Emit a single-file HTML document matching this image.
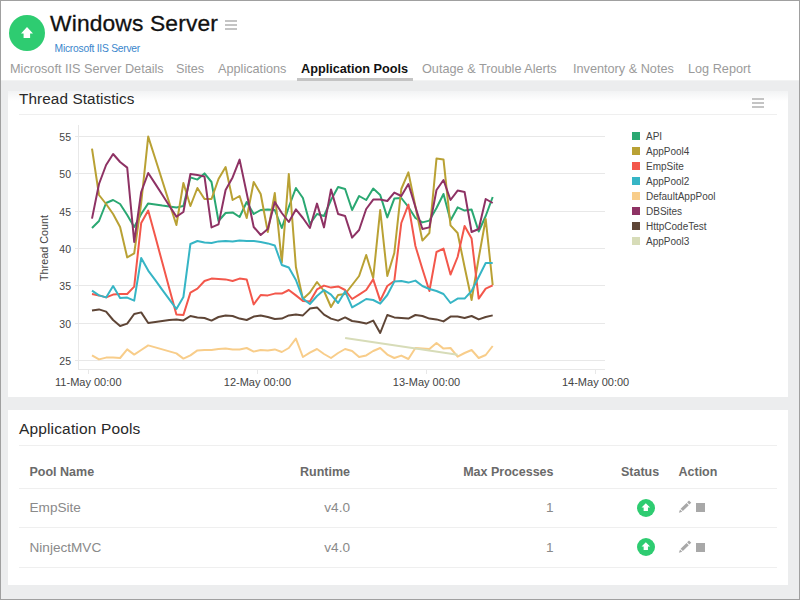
<!DOCTYPE html>
<html><head><meta charset="utf-8">
<style>
*{margin:0;padding:0;box-sizing:border-box}
html,body{width:800px;height:600px;overflow:hidden;background:#fff}
body{position:relative;font-family:"Liberation Sans",sans-serif}
.t{position:absolute;white-space:nowrap;line-height:1}
.frame{position:absolute;left:0;top:0;width:800px;height:600px;border:1px solid #a0a0a0;z-index:50;pointer-events:none}
.bg{position:absolute;left:1px;top:80px;width:798px;height:519px;background:#ecedee;border-top:1px solid #f2f3f3}
.panel{position:absolute;left:8px;width:780px;background:#fff}
.sep{position:absolute;height:1px;background:#efefef}
.tab{font-size:12.7px;color:#9b9b9b}
.ham span{position:absolute;left:0;width:12px;height:2px;background:#c4c4c4}
.th{font-size:12.5px;font-weight:bold;color:#6a6a6a}
.td{font-size:13.6px;color:#8a8a8a}
</style></head><body>
<div class="frame"></div>

<!-- header -->
<svg style="position:absolute;left:9px;top:15px" width="36" height="36" viewBox="0 0 36 36">
<circle cx="18" cy="18" r="18" fill="#2ecc71"/>
<path d="M18 12 L24 18.5 L21.1 18.5 L21.1 23 L14.6 23 L14.6 18.5 L12 18.5 Z" fill="#fff"/>
</svg>
<div class="t" style="left:50px;top:12.1px;font-size:22.8px;letter-spacing:0.15px;-webkit-text-stroke:0.3px #111;color:#111">Windows Server</div>
<div class="ham" style="position:absolute;left:225px;top:20px;width:12px;height:10px">
<span style="top:0"></span><span style="top:4px"></span><span style="top:8px"></span></div>
<div class="t" style="left:54.6px;top:44.4px;font-size:10.3px;letter-spacing:-0.25px;color:#3a86cc">Microsoft IIS Server</div>

<div class="t tab" style="left:10px;top:63.1px">Microsoft IIS Server Details</div>
<div class="t tab" style="left:176px;top:63.1px">Sites</div>
<div class="t tab" style="left:218px;top:63.1px">Applications</div>
<div class="t tab" style="left:301px;top:63.1px;color:#111;font-weight:bold">Application Pools</div>
<div class="t tab" style="left:422px;top:63.1px">Outage &amp; Trouble Alerts</div>
<div class="t tab" style="left:573px;top:63.1px">Inventory &amp; Notes</div>
<div class="t tab" style="left:688px;top:63.1px">Log Report</div>
<div style="position:absolute;left:297px;top:78px;width:116px;height:3px;background:#c4c4c4;z-index:2"></div>

<div class="bg"></div>

<!-- panel 1 -->
<div class="panel" style="top:91px;height:306px">
  <div style="position:absolute;left:0;top:0;width:780px;height:10px;background:linear-gradient(#f2f3f4,#fff)"></div>
</div>
<div class="t" style="left:19px;top:91.2px;font-size:15.3px;letter-spacing:0.1px;color:#282828">Thread Statistics</div>
<div class="ham" style="position:absolute;left:752px;top:98px;width:12px;height:10px">
<span style="top:0"></span><span style="top:4px"></span><span style="top:8px"></span></div>
<div class="sep" style="left:19px;top:114px;width:758px"></div>

<svg id="chart" style="position:absolute;left:0;top:0" width="800" height="400" viewBox="0 0 800 400">
<line x1="75" y1="136.5" x2="605" y2="136.5" stroke="#e8e8e8" stroke-width="1"/>
<text x="71" y="140.7" text-anchor="end" font-size="10.5" fill="#444">55</text>
<line x1="75" y1="173.5" x2="605" y2="173.5" stroke="#e8e8e8" stroke-width="1"/>
<text x="71" y="177.7" text-anchor="end" font-size="10.5" fill="#444">50</text>
<line x1="75" y1="211.5" x2="605" y2="211.5" stroke="#e8e8e8" stroke-width="1"/>
<text x="71" y="215.7" text-anchor="end" font-size="10.5" fill="#444">45</text>
<line x1="75" y1="248.5" x2="605" y2="248.5" stroke="#e8e8e8" stroke-width="1"/>
<text x="71" y="252.7" text-anchor="end" font-size="10.5" fill="#444">40</text>
<line x1="75" y1="285.5" x2="605" y2="285.5" stroke="#e8e8e8" stroke-width="1"/>
<text x="71" y="289.7" text-anchor="end" font-size="10.5" fill="#444">35</text>
<line x1="75" y1="323.5" x2="605" y2="323.5" stroke="#e8e8e8" stroke-width="1"/>
<text x="71" y="327.7" text-anchor="end" font-size="10.5" fill="#444">30</text>
<line x1="75" y1="360.5" x2="605" y2="360.5" stroke="#e8e8e8" stroke-width="1"/>
<text x="71" y="364.7" text-anchor="end" font-size="10.5" fill="#444">25</text>
<line x1="78.5" y1="125" x2="78.5" y2="370" stroke="#e8e8e8"/>
<line x1="78" y1="369.5" x2="605" y2="369.5" stroke="#e8e8e8"/>
<line x1="88.5" y1="370" x2="88.5" y2="374" stroke="#e8e8e8"/>
<text x="88.3" y="385.8" text-anchor="middle" font-size="11" fill="#444">11-May 00:00</text>
<line x1="257.5" y1="370" x2="257.5" y2="374" stroke="#e8e8e8"/>
<text x="257.4" y="385.8" text-anchor="middle" font-size="11" fill="#444">12-May 00:00</text>
<line x1="426.5" y1="370" x2="426.5" y2="374" stroke="#e8e8e8"/>
<text x="426.5" y="385.8" text-anchor="middle" font-size="11" fill="#444">13-May 00:00</text>
<line x1="595.5" y1="370" x2="595.5" y2="374" stroke="#e8e8e8"/>
<text x="595.6" y="385.8" text-anchor="middle" font-size="11" fill="#444">14-May 00:00</text>
<text transform="translate(48.3,248) rotate(-90)" text-anchor="middle" font-size="10.8" fill="#444">Thread Count</text>
<rect x="632" y="132" width="8" height="8" fill="#2aa872"/>
<text x="646" y="139.6" font-size="10" fill="#444">API</text>
<rect x="632" y="147" width="8" height="8" fill="#b9a134"/>
<text x="646" y="154.6" font-size="10" fill="#444">AppPool4</text>
<rect x="632" y="162" width="8" height="8" fill="#f3574b"/>
<text x="646" y="169.6" font-size="10" fill="#444">EmpSite</text>
<rect x="632" y="177" width="8" height="8" fill="#36b5c5"/>
<text x="646" y="184.6" font-size="10" fill="#444">AppPool2</text>
<rect x="632" y="192" width="8" height="8" fill="#f8cd8a"/>
<text x="646" y="199.6" font-size="10" fill="#444">DefaultAppPool</text>
<rect x="632" y="207" width="8" height="8" fill="#8e3264"/>
<text x="646" y="214.6" font-size="10" fill="#444">DBSites</text>
<rect x="632" y="222" width="8" height="8" fill="#5e4536"/>
<text x="646" y="229.6" font-size="10" fill="#444">HttpCodeTest</text>
<rect x="632" y="237" width="8" height="8" fill="#d7dcb8"/>
<text x="646" y="244.6" font-size="10" fill="#444">AppPool3</text>
<polyline points="92.0,228.0 99.0,221.0 106.1,203.0 113.1,200.0 120.1,204.0 127.2,215.0 134.2,227.0 141.2,214.0 148.2,203.4 155.3,204.4 162.3,205.6 169.3,206.6 176.4,207.4 183.4,206.0 190.4,177.4 197.4,179.6 204.5,173.4 211.5,182.0 218.5,221.0 225.6,213.0 232.6,212.4 239.6,217.0 246.7,202.0 253.7,214.0 260.7,210.0 267.8,209.6 274.8,210.0 281.8,228.0 288.8,207.0 295.9,188.0 302.9,198.0 309.9,224.0 317.0,214.0 324.0,216.0 331.0,200.0 338.1,187.0 345.1,189.0 352.1,210.0 359.1,196.0 366.2,200.0 373.2,188.6 380.2,195.0 387.3,217.4 394.3,198.6 401.3,198.0 408.4,207.0 415.4,218.0 422.4,222.4 429.4,220.6 436.5,208.0 443.5,194.0 450.5,220.5 457.6,207.4 464.6,210.6 471.6,209.6 478.7,231.5 485.7,216.0 492.7,197.0" fill="none" stroke="#2aa872" stroke-width="2" stroke-linejoin="round" stroke-linecap="butt"/>
<polyline points="92.0,148.6 99.0,195.0 106.1,204.0 113.1,214.0 120.1,227.0 127.2,257.4 134.2,253.4 141.2,203.0 148.2,136.6 155.3,158.7 162.3,180.8 169.3,202.9 176.4,225.0 183.4,183.0 190.4,206.0 197.4,188.0 204.5,199.0 211.5,199.0 218.5,179.0 225.6,167.0 232.6,200.0 239.6,196.0 246.7,218.0 253.7,182.0 260.7,194.0 267.8,232.0 274.8,193.0 281.8,262.5 288.8,174.0 295.9,267.0 302.9,299.0 309.9,292.5 317.0,282.0 324.0,291.0 331.0,307.0 338.1,295.0 345.1,294.0 352.1,285.0 359.1,276.0 366.2,255.0 373.2,278.0 380.2,210.0 387.3,276.0 394.3,253.0 401.3,189.0 408.4,172.4 415.4,206.5 422.4,240.6 429.4,233.0 436.5,158.6 443.5,159.4 450.5,225.4 457.6,233.0 464.6,267.0 471.6,300.0 478.7,258.0 485.7,219.0 492.7,285.0" fill="none" stroke="#b9a134" stroke-width="2" stroke-linejoin="round" stroke-linecap="butt"/>
<polyline points="92.0,294.0 99.0,295.4 106.1,297.4 113.1,294.6 120.1,294.0 127.2,294.0 134.2,286.6 141.2,223.0 148.2,210.6 155.3,236.6 162.3,262.6 169.3,288.6 176.4,314.6 183.4,315.0 190.4,292.6 197.4,288.6 204.5,281.0 211.5,278.6 218.5,279.0 225.6,279.4 232.6,281.0 239.6,278.6 246.7,279.4 253.7,304.4 260.7,295.0 267.8,295.4 274.8,293.6 281.8,293.6 288.8,290.0 295.9,295.4 302.9,301.0 309.9,301.6 317.0,289.4 324.0,285.6 331.0,287.6 338.1,286.4 345.1,290.0 352.1,299.0 359.1,294.6 366.2,290.0 373.2,279.4 380.2,300.6 387.3,286.0 394.3,281.0 401.3,223.0 408.4,204.6 415.4,246.0 422.4,269.0 429.4,291.0 436.5,252.0 443.5,248.6 450.5,274.6 457.6,257.0 464.6,226.0 471.6,238.6 478.7,298.6 485.7,288.6 492.7,285.4" fill="none" stroke="#f3574b" stroke-width="2" stroke-linejoin="round" stroke-linecap="butt"/>
<polyline points="92.0,290.6 99.0,295.4 106.1,297.4 113.1,286.0 120.1,298.0 127.2,297.6 134.2,300.6 141.2,258.0 148.2,270.6 155.3,280.2 162.3,289.8 169.3,299.4 176.4,309.0 183.4,297.0 190.4,244.0 197.4,241.0 204.5,242.6 211.5,243.0 218.5,241.4 225.6,241.0 232.6,241.6 239.6,240.6 246.7,241.0 253.7,241.0 260.7,242.0 267.8,243.4 274.8,245.5 281.8,265.0 288.8,267.5 295.9,280.0 302.9,298.6 309.9,304.0 317.0,296.0 324.0,290.0 331.0,294.6 338.1,303.0 345.1,291.4 352.1,307.4 359.1,303.4 366.2,299.0 373.2,300.0 380.2,303.6 387.3,295.0 394.3,281.6 401.3,281.0 408.4,282.6 415.4,280.6 422.4,286.0 429.4,289.0 436.5,291.0 443.5,294.0 450.5,303.0 457.6,298.6 464.6,298.6 471.6,291.0 478.7,277.0 485.7,263.0 492.7,263.0" fill="none" stroke="#36b5c5" stroke-width="2" stroke-linejoin="round" stroke-linecap="butt"/>
<polyline points="92.0,355.4 99.0,359.4 106.1,357.6 113.1,357.6 120.1,358.0 127.2,349.4 134.2,354.6 141.2,350.0 148.2,345.4 155.3,347.4 162.3,349.4 169.3,351.4 176.4,353.4 183.4,358.6 190.4,355.4 197.4,350.4 204.5,350.0 211.5,350.0 218.5,349.0 225.6,348.4 232.6,349.4 239.6,349.4 246.7,348.0 253.7,351.6 260.7,350.0 267.8,350.4 274.8,349.4 281.8,352.0 288.8,348.0 295.9,338.6 302.9,357.0 309.9,352.6 317.0,349.0 324.0,354.0 331.0,358.0 338.1,353.0 345.1,349.0 352.1,351.0 359.1,357.0 366.2,355.4 373.2,351.0 380.2,348.0 387.3,354.6 394.3,358.0 401.3,355.6 408.4,359.0 415.4,348.0 422.4,348.4 429.4,349.0 436.5,343.0 443.5,348.6 450.5,348.0 457.6,356.6 464.6,353.0 471.6,350.0 478.7,358.0 485.7,355.0 492.7,346.0" fill="none" stroke="#f8cd8a" stroke-width="2" stroke-linejoin="round" stroke-linecap="butt"/>
<polyline points="92.0,218.6 99.0,184.0 106.1,165.0 113.1,154.0 120.1,162.0 127.2,167.6 134.2,242.0 141.2,192.0 148.2,173.0 155.3,183.9 162.3,194.8 169.3,205.7 176.4,216.6 183.4,212.0 190.4,174.0 197.4,175.0 204.5,176.6 211.5,227.4 218.5,224.4 225.6,190.0 232.6,177.4 239.6,159.6 246.7,193.3 253.7,227.0 260.7,235.0 267.8,229.0 274.8,202.0 281.8,213.0 288.8,222.0 295.9,209.4 302.9,218.0 309.9,228.0 317.0,203.6 324.0,227.4 331.0,189.4 338.1,214.0 345.1,216.0 352.1,237.6 359.1,230.0 366.2,209.0 373.2,199.6 380.2,199.4 387.3,201.0 394.3,192.6 401.3,196.0 408.4,184.0 415.4,207.0 422.4,229.0 429.4,227.4 436.5,190.0 443.5,180.0 450.5,200.0 457.6,190.6 464.6,192.0 471.6,232.0 478.7,229.0 485.7,199.0 492.7,203.0" fill="none" stroke="#8e3264" stroke-width="2" stroke-linejoin="round" stroke-linecap="butt"/>
<polyline points="92.0,310.6 99.0,309.4 106.1,311.6 113.1,320.0 120.1,326.0 127.2,323.6 134.2,314.0 141.2,312.4 148.2,323.0 155.3,322.0 162.3,321.0 169.3,320.0 176.4,319.4 183.4,320.4 190.4,316.0 197.4,317.4 204.5,318.0 211.5,320.6 218.5,317.0 225.6,315.4 232.6,316.0 239.6,318.6 246.7,320.0 253.7,316.6 260.7,315.4 267.8,317.0 274.8,319.0 281.8,318.6 288.8,315.4 295.9,314.6 302.9,315.4 309.9,308.6 317.0,307.4 324.0,314.6 331.0,318.6 338.1,320.6 345.1,317.4 352.1,321.0 359.1,322.0 366.2,323.6 373.2,320.6 380.2,333.0 387.3,315.0 394.3,317.4 401.3,318.0 408.4,318.6 415.4,315.0 422.4,316.0 429.4,318.6 436.5,319.4 443.5,321.4 450.5,316.6 457.6,316.6 464.6,318.0 471.6,316.0 478.7,319.4 485.7,317.0 492.7,315.4" fill="none" stroke="#5e4536" stroke-width="2" stroke-linejoin="round" stroke-linecap="butt"/>
<polyline points="345.1,338.0 457.6,354.8" fill="none" stroke="#d7dcb8" stroke-width="2" stroke-linejoin="round" stroke-linecap="butt"/>
</svg>

<!-- panel 2 -->
<div class="panel" style="top:410px;height:175px"></div>
<div class="t" style="left:19px;top:420.9px;font-size:15.5px;letter-spacing:0.15px;color:#282828">Application Pools</div>
<div class="sep" style="left:19px;top:445px;width:758px"></div>

<div class="t th" style="left:29.5px;top:466.2px">Pool Name</div>
<div class="t th" style="right:450px;top:466.2px">Runtime</div>
<div class="t th" style="right:246.5px;top:466.2px">Max Processes</div>
<div class="t th" style="left:621px;top:466.2px">Status</div>
<div class="t th" style="left:678.5px;top:466.2px">Action</div>
<div class="sep" style="left:19px;top:488px;width:758px"></div>

<div class="t td" style="left:29.5px;top:501px">EmpSite</div>
<div class="t td" style="right:450px;top:501px">v4.0</div>
<div class="t td" style="right:246.5px;top:501px">1</div>
<div class="sep" style="left:19px;top:527px;width:758px"></div>

<div class="t td" style="left:29.5px;top:541px">NinjectMVC</div>
<div class="t td" style="right:450px;top:541px">v4.0</div>
<div class="t td" style="right:246.5px;top:541px">1</div>
<div class="sep" style="left:19px;top:567px;width:758px"></div>


<svg style="position:absolute;left:637px;top:498.7px" width="18" height="18" viewBox="0 0 18 18"><circle cx="9" cy="9" r="9" fill="#2ecc71"/><path d="M8.8 4.2 L13.1 8.6 L10.95 8.6 L10.95 12 L6.65 12 L6.65 8.6 L4.5 8.6 Z" fill="#fff"/></svg>
<svg style="position:absolute;left:637px;top:538.2px" width="18" height="18" viewBox="0 0 18 18"><circle cx="9" cy="9" r="9" fill="#2ecc71"/><path d="M8.8 4.2 L13.1 8.6 L10.95 8.6 L10.95 12 L6.65 12 L6.65 8.6 L4.5 8.6 Z" fill="#fff"/></svg>
<svg style="position:absolute;left:677px;top:499px" width="16" height="16" viewBox="0 0 16 16"><path d="M1.90 13.80 L5.29 12.67 L3.03 10.41 Z M5.86 12.10 L11.80 6.16 L9.54 3.90 L3.60 9.84 Z M12.37 5.60 L14.27 3.69 L12.01 1.43 L10.10 3.33 Z" fill="#a8a8a8"/></svg>
<div style="position:absolute;left:696px;top:503px;width:9px;height:9px;background:#a8a8a8"></div>
<svg style="position:absolute;left:677px;top:538.5px" width="16" height="16" viewBox="0 0 16 16"><path d="M1.90 13.80 L5.29 12.67 L3.03 10.41 Z M5.86 12.10 L11.80 6.16 L9.54 3.90 L3.60 9.84 Z M12.37 5.60 L14.27 3.69 L12.01 1.43 L10.10 3.33 Z" fill="#a8a8a8"/></svg>
<div style="position:absolute;left:696px;top:542.5px;width:9px;height:9px;background:#a8a8a8"></div>
</body></html>
